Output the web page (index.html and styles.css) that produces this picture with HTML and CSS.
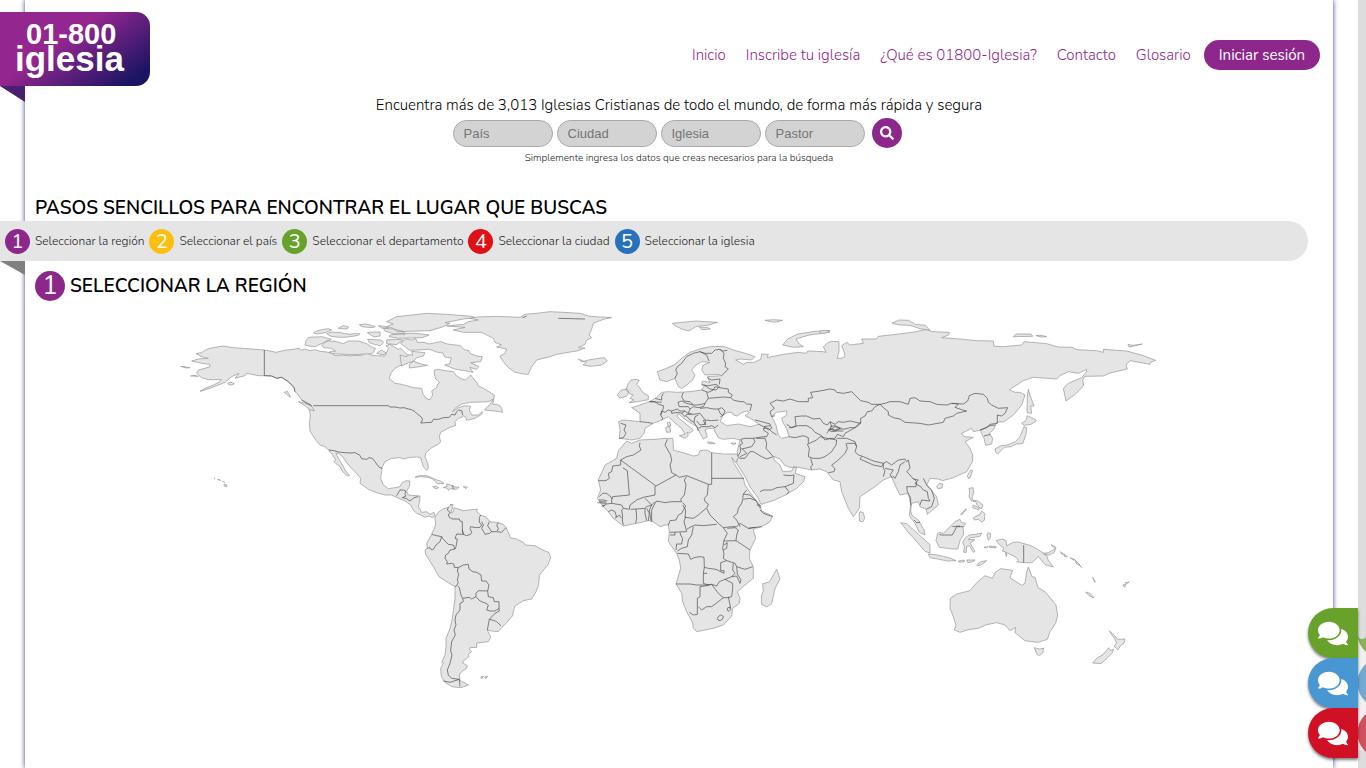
FILE: index.html
```html
<!DOCTYPE html>
<html lang="es">
<head>
<meta charset="utf-8">
<meta name="viewport" content="width=device-width, initial-scale=1">
<title>01-800 Iglesia</title>
<link rel="stylesheet" href="styles.css">
</head>
<body>
<div class="sheet">
  <header class="header">
    <a class="logo fold" href="#"><span class="logo-number">01-800</span><span class="logo-name">iglesia</span></a>
    <nav class="nav">
      <a href="#">Inicio</a>
      <a href="#">Inscribe tu iglesía</a>
      <a href="#">¿Qué es 01800-Iglesia?</a>
      <a href="#">Contacto</a>
      <a href="#">Glosario</a>
      <button class="login" type="button">Iniciar sesión</button>
    </nav>
  </header>
  <main>
    <form class="search">
      <p class="search-title">Encuentra más de 3,013 Iglesias Cristianas de todo el mundo, de forma más rápida y segura</p>
      <div class="search-row">
        <input type="text" placeholder="País" aria-label="País">
        <input type="text" placeholder="Ciudad" aria-label="Ciudad">
        <input type="text" placeholder="Iglesia" aria-label="Iglesia">
        <input type="text" placeholder="Pastor" aria-label="Pastor">
        <button class="search-button" type="submit" aria-label="Buscar"><svg viewBox="0 0 512 512"><path d="M505 442.7L405.3 343c-4.5-4.5-10.6-7-17-7H372c27.6-35.3 44-79.7 44-128C416 93.1 322.9 0 208 0S0 93.1 0 208s93.1 208 208 208c48.3 0 92.7-16.4 128-44v16.3c0 6.4 2.5 12.5 7 17l99.7 99.7c9.4 9.4 24.6 9.4 33.9 0l28.3-28.3c9.4-9.4 9.4-24.6.1-34zM208 336c-70.7 0-128-57.2-128-128 0-70.7 57.2-128 128-128 70.7 0 128 57.2 128 128 0 70.7-57.2 128-128 128z"/></svg></button>
      </div>
      <p class="search-note">Simplemente ingresa los datos que creas necesarios para la búsqueda</p>
    </form>
    <h2 class="title">PASOS SENCILLOS PARA ENCONTRAR EL LUGAR QUE BUSCAS</h2>
    <ol class="steps fold">
      <li><span class="number purple">1</span>Seleccionar la región</li>
      <li><span class="number yellow">2</span>Seleccionar el país</li>
      <li><span class="number green">3</span>Seleccionar el departamento</li>
      <li><span class="number red">4</span>Seleccionar la ciudad</li>
      <li><span class="number blue">5</span>Seleccionar la iglesia</li>
    </ol>
    <h2 class="title region-title"><span class="number large purple">1</span>SELECCIONAR LA REGIÓN</h2>
    <svg class="map" viewBox="-435 0 3924 1170" role="img" aria-label="Mapa del mundo">
      <!-- North America -->
      <g>
        <path class="land" d="M283 135L300 138 318 142 335 138 350 135 370 133 388 130 392 136 405 132 420 137 435 134 450 139 470 141 490 146 492 151 505 152 515 150 540 153 550 151 575 152 577 147 592 145 605 151 620 152 645 153 650 142 655 130 648 122 660 118 672 125 685 133 692 130 705 143 718 152 720 166 712 175 690 182 675 190 664 203 657 220 675 235 690 237 710 242 730 248 755 250 758 265 768 280 780 284 788 270 785 258 800 248 802 240 808 232 797 222 794 210 792 196 805 193 825 197 850 200 860 213 875 222 887 225 902 210 922 235 925 243 940 250 960 262 973 270 972 281 955 290 930 291 900 292 875 297 855 310 848 320 865 308 885 302 902 304 898 315 905 330 925 330 937 320 935 328 915 340 890 346 888 338 880 332 877 336 865 340 855 350 857 362 840 367 825 375 812 382 808 395 812 410 805 418 785 428 768 443 765 455 773 475 775 490 770 496 760 485 755 470 752 458 740 456 720 457 700 462 690 458 665 460 645 470 636 488 635 500 632 520 640 540 655 551 675 548 690 545 697 532 710 527 720 528 718 545 710 558 715 570 750 573 749 590 745 605 755 622 770 620 780 628 792 622 795 632 788 638 777 633 765 637 753 630 740 625 730 615 722 600 705 588 690 582 665 570 645 570 620 563 595 553 570 535 572 520 555 500 540 485 528 470 518 455 505 445 498 445 505 460 515 475 525 495 538 512 532 513 518 500 510 485 497 475 492 470 497 465 488 450 476 435 465 425 450 420 435 402 420 378 418 355 421 330 417 312 425 302 410 292 395 285 385 270 375 260 372 245 355 230 335 217 320 220 305 213 283 212 265 212 230 205 225 212 195 220 207 205 185 215 165 232 150 238 120 250 90 259 105 250 130 240 150 230 155 224 130 224 115 224 95 218 80 205 85 195 105 190 120 185 120 178 95 175 65 168 85 162 115 160 95 155 78 146 95 143 110 133 130 128 160 123 190 128 230 131Z"/>
        <path class="land" d="M32 184l10 1 18 3-12 1zM62 213l10-2 13 3zM173 234l10-2 10 4-8 4-10-2zM343 262l9-3 4 8 6 10-9-6zM385 290l18 4 22 10 8 14-15-5-15-12zM132 519l3 2zM143 523l9 3zM156 528l10 4M163 537l7 3 0 5-8-2zM405 120l3-13 8-10 40-2 28 8-22 10-15 6-10 6-20-2zM430 83l20-8 25-4 10 4-20 8-25 4zM505 70l15-8 16 4-5 6zM470 86l15-5 25 2 30 5 10-2 20 0-5 5-30 5-30 1-25-4zM568 59l20-2 28 8-10 3-30-3zM592 83l15-2 23 0 0 12-18 3zM455 122l15-15 30 3 20 6 15-8 30 0 25 8 15 10 12 5-10 15-60 3-60-3-10-5 20-3-15-8-20-2zM593 103l20 1 20 1 8 7-10 10-18-4-15-5zM625 62l20 2 10 5-20 0zM620 145l15-10 15 10-12 4zM650 50l30-15 90-10 60 3 75 6 15 5-35 2-60 12 15 2-20 10-40 12-100 3-10-10-20-5 20-8zM640 70l30 2 30 7 5 9-35-2-25-8zM660 90l40-5 40 0 37 5-20 8-70 2-30-5zM650 105l30-2 20 2-20 14-30-3zM692 115l15-13 20 3 10-5 5 12 20 0 15 5 35-7 20 7 40 5 10 12 15 3 3 8 20 8 17 2-5 15-30 3 25 12-8 8-20-6 10 15-25-5-30-5-30-12 15-3 5-18-20-3-5-12-20-3-20-8-60 3zM690 150l18 5 10-6 10 2-3-12 40 4-5 10-20 5-10 12-15 3-20 10zM718 178l12-10 25 10 18 3-30 5-25 3zM943 315l15-15 13-18-3 16 12 0 10 4 5 8 2 12-15-3z"/>
        <path class="land" d="M922 36L980 34 1050 37 1065 28 1100 25 1140 20 1180 22 1230 25 1255 33 1275 35 1325 38 1300 43 1270 55 1265 72 1257 90 1265 98 1250 106 1245 118 1225 128 1245 129 1225 137 1160 148 1140 155 1100 165 1085 185 1075 208 1060 207 1035 202 1015 188 1000 170 990 153 1005 145 1010 132 980 126 995 120 975 112 970 100 935 82 880 82 850 75 885 67 830 63 880 58 895 50 925 45 900 40ZM1225 162l10 9 20-6 30-5 18-2 9 10-18 12-30 4-25-4 10-8z"/>
        <path class="land" d="M735 517l12-5 23 0 15 6 15 7 12 3 10 8-20 0-14-14-14-5-22-2zM788 545l10-1 8 4-8 4zM820 548l10-4 0-7 10 2 12 6 15 2-8 6-18-2-6 5-4-7zM880 545l12 1-4 5zM841 598l9 2z"/>
        <path class="border" d="M283 135V212L305 213 320 220 335 217 355 230 372 248 375 260M430 302H655L660 306 675 306 690 309 702 308 715 312 725 314 735 320 742 327 754 336 758 344 752 354 768 353 785 352 790 343 805 343 820 338 838 337 845 328 855 330 860 320 865 315 875 317 878 330M476 435L492 437 505 441 525 443 540 444 555 443 570 451 575 461 590 463 597 458 607 460 615 470 622 480 628 487 637 490M680 572L690 555 700 555 707 558 705 568 708 573 697 578 708 580 720 588 732 578 745 575M1057 38L1070 34M1165 40L1245 42M395 285L402 290 425 302M848 540L850 553"/>
      </g>
      <!-- South America -->
      <g transform="translate(690 570)">
        <path class="land" d="M105 65L115 52 128 42 145 37 155 28 158 38 152 55 160 50 162 38 175 42 190 47 215 44 232 42 230 50 242 60 258 66 270 80 295 83 310 88 318 98 328 118 330 128 350 132 370 142 375 150 405 152 425 163 447 173 452 188 445 208 425 232 418 240 416 270 408 290 395 312 370 317 345 333 340 350 338 362 320 383 303 400 295 410 275 408 262 405 272 425 265 440 230 444 230 457 210 458 208 465 215 470 205 478 207 485 190 498 188 504 202 512 200 520 185 530 178 540 180 556 205 570 183 578 155 575 135 562 124 545 122 520 130 505 125 503 135 480 138 455 138 430 150 400 157 370 165 310 165 275 145 263 117 245 100 215 77 178 75 165 82 160 80 145 95 118 107 90 105 70ZM242 546l8-2-5 7zM254 546l9-2-6 7z"/>
        <path class="border" d="M145 37L142 45 150 52 145 60 148 67 158 72 178 72 180 78 187 80 187 105 190 118 170 117 165 130 172 132 168 155 165 162 160 150 145 148 130 133 125 125 110 122 95 118M125 125L120 140 108 150 100 163 95 165 90 158 82 160M187 105L190 118 200 122 212 118 215 112 210 100 212 95 228 98 240 97 245 90 238 82 238 68 242 60M245 80L250 90 245 100 252 112 255 118 268 115 275 110 290 110 305 112 318 98M268 80L263 92 275 110M295 83L290 92 295 100 292 108M165 162L150 165 145 175 137 180 135 190 142 200 140 207 155 205 162 208 163 217 175 218 172 228 176 238 172 255 175 262 170 272 165 275M175 218L190 210 205 208 207 222 218 230 230 232 243 240 245 258 258 258 267 270 263 288 235 287 228 295 228 305 215 312 208 307 188 310 183 300 178 278 172 272M228 305L240 318 258 325 265 330 260 345 270 348 285 348 297 340 297 320 283 320 280 308 265 305 263 288M297 340L298 348 285 355 268 373 280 376 290 380 303 393M268 373L262 405M188 310L190 320 180 325 180 345 168 360 165 375 168 390 162 405 166 420 155 440 152 468 156 480 150 505 142 525 145 540 155 550 178 553 180 574M130 558L150 562 178 553"/>
      </g>
      <!-- Europe and Asia -->
      <g transform="translate(1260 0)">
        <path class="land" d="M202 200L230 190 255 178 275 160 300 142 330 132 360 125 400 124 440 138 470 146 495 155 485 165 450 162 437 165 460 178 470 172 490 173 512 163 515 147 535 148 532 158 580 148 625 142 650 145 653 138 700 140 708 142 700 125 715 112 725 109 747 110 747 140 742 160 755 160 765 155 762 140 755 122 770 112 780 120 820 115 815 102 860 102 865 94 920 88 980 80 1010 73 1025 80 1078 82 1075 90 1055 98 1110 102 1160 107 1210 108 1212 124 1240 125 1295 120 1302 110 1370 116 1405 126 1445 127 1460 134 1520 137 1540 142 1540 133 1610 138 1660 152 1697 166 1682 172 1680 178 1620 167 1608 180 1612 192 1560 204 1540 213 1485 214 1478 224 1481 240 1468 256 1455 268 1428 288 1420 250 1435 235 1475 218 1490 200 1490 193 1465 205 1435 200 1410 212 1400 222 1330 217 1300 227 1258 254 1275 262 1290 262 1305 270 1295 300 1270 330 1242 350 1220 352 1212 372 1198 385 1208 400 1205 417 1187 421 1182 400 1174 385 1172 375 1150 380 1145 370 1115 385 1122 395 1150 397 1125 410 1140 430 1148 450 1148 468 1130 500 1090 518 1058 527 1045 522 1020 520 1010 540 1040 575 1045 600 1012 628 1008 612 990 605 985 590 965 595 962 618 965 630 985 645 1002 675 1005 690 988 682 975 655 958 632 962 600 955 565 930 570 915 540 905 515 880 525 855 545 810 575 808 610 790 635 775 610 755 560 750 530 730 525 710 500 690 492 665 495 625 487 600 487 583 480 570 462 553 455 552 465 570 480 578 500 605 498 612 485 620 487 615 505 645 515 640 530 620 550 590 568 555 585 513 598 505 580 480 545 465 515 440 475 443 455 442 440 450 405 430 400 400 403 385 398 375 380 372 370 355 370 345 375 352 395 340 402 330 385 322 365 312 360 295 350 275 335 265 325 262 335 285 355 310 375 300 385 290 382 295 392 285 400 268 392 285 388 275 370 250 350 235 335 215 345 190 355 165 370 162 385 150 400 125 405 105 402 88 400 90 375 86 350 100 345 150 350 150 325 125 308 150 300 178 290 200 278 215 262 235 260 262 262 300 260 335 255 345 240 335 238 338 228 360 232 352 215 395 212 385 208 345 210 335 195 340 180 360 172 335 170 318 180 305 195 315 210 308 225 290 240 275 250 265 245 255 220 230 230 210 225Z"/>
        <path class="sea" d="M391 350L398 332 410 323 425 322 430 330 442 333 455 323 470 318 478 323 465 332 490 345 507 358 480 365 445 357 410 362zM545 335L560 322 590 318 590 330 575 340 580 355 590 370 597 395 575 400 565 390 558 360z"/>
        <path class="land" d="M115 235l8-10 15-2 10 3-8 12 8 8 12 18 15 8 0 12-30 6-28 3 15-8-12-5 10-10-12-4-10-12zM82 270l12-15 18-3 5 10-8 12-20 5zM232 353l8-2 2 12-8 2zM227 368l12-5 3 18-12 1zM352 411l15 1 8 4-18 0zM423 414l15 1-8 4zM247 55l30-3 40-4 65 4-25 8-40 5-20 13-20-5-20-10zM328 67l25 0 8 5-25 2zM525 46l25-2 28 2-25 6zM578 120l15-18 30-15 55-8 40-3 0 6-60 8-40 12 10 15 12 8-30 2z"/>
        <path class="border" d="M255 220L262 205 257 195 262 185 275 175 290 155 310 145 330 140 345 145 365 145 375 135 390 133 398 138 412 136M390 133L402 145 400 160 407 175 405 185 415 192 395 212M330 140L350 150 357 168M335 240L355 242 378 238 388 245 378 255 360 252 345 242M352 218L365 225 390 222 388 238M335 255L355 262 370 255 375 245 400 250 415 252 415 262 427 270 422 278 400 276 355 280 350 262M280 262L275 275 282 288 300 290 310 300 320 300 335 298 345 295 355 280M264 292L275 288 290 295 310 300M422 278L430 285 450 290 462 290 470 297 485 298 480 318M345 295L340 305 325 308 310 305 300 312 295 325 285 318 270 318 262 312 245 318 235 315 225 322 215 318 212 330 218 340 215 345M188 355L170 352 150 350M212 330L220 310 220 302 205 298 195 290 178 290M220 265L215 275 215 285 205 283 195 280M178 290L215 292M245 318L245 325 265 322 275 325 285 318M264 292L268 305 295 305 300 312M330 310L350 308 370 312 385 312 395 308 405 318 400 330 391 335M385 312L390 325 398 330M295 325L310 328 330 325 340 338 345 345 365 347 385 345M275 325L285 335 290 328 305 328M288 332L300 345 312 352 315 335 325 330M312 352L320 365 325 378M320 348L330 360 345 358 340 345M325 370L335 365 355 365 365 362 375 368 385 360M345 345L347 360M92 355L108 360 102 375 108 385 100 398 88 400M495 345L515 350 540 357 545 370 535 375 525 365 520 375 535 385 530 395 520 395 490 400 465 400 452 403 458 415 450 420 452 440 443 455M490 400L495 410 485 425 455 432M455 430L470 445 450 455M520 370L535 370 545 380 560 390M507 358L520 365 540 362M545 335L540 320 553 310 540 295 560 285 580 288 600 282 625 290 655 290 655 280 668 278 662 262 690 258 720 252 735 255 740 262 760 265 785 260 795 270 812 287 835 292 845 298 870 298M545 335L555 332M870 298L855 305 845 318 832 320 825 333 812 340 812 355 780 348 760 352 745 350 735 358 720 350 712 360 700 355 690 340 670 342 650 333 635 333 615 335 618 362 605 368 590 358M870 298L885 295 900 290 930 290 955 298 960 280 975 278 990 288 1020 290 1040 298 1070 300 1085 295 1120 297 1133 288 1138 272 1155 265 1180 268 1192 280 1195 292 1205 300 1225 310 1253 308 1245 325 1235 333 1222 330 1222 355 1200 358 1190 368 1170 375M1085 295L1105 297 1095 307 1118 315 1130 318 1100 325 1090 333 1065 340 1060 352 1015 360 990 355 945 352 930 342 910 338 895 330 895 320 885 312 870 298M597 368L605 368 625 362 650 362 665 370 675 382 695 392 705 405 720 400 735 400 742 388 760 395 765 385 800 365 812 355M655 415L655 398 640 392 615 398 597 395M665 412L680 405 690 395 710 400 740 405 738 420 725 440 705 455 690 460 670 460 655 455 658 430 652 418 665 412M720 350L725 365 715 375 725 380 740 378 760 378M720 375L735 365 755 370M740 400L770 400 795 410 800 425 795 440 805 450 820 455 850 468 880 475 890 470 905 480 925 465 945 462 950 470 955 465 960 490 950 500 960 510 970 522 985 525M768 415L772 430 765 445 745 465 732 475 725 480 735 492 732 500 715 503M770 415L795 415 800 425M815 455L810 462 850 480 875 485 880 475M880 475L880 490 885 497 880 515M885 490L910 495 900 510 908 520M945 470L930 480 925 500 915 520 908 512M970 520L980 530 978 545 950 545 952 560 962 580 962 600M985 525L975 535 992 545 1000 555 1012 560 1015 580 1020 588 995 585 990 600M1000 520L1010 540 1025 555 1033 580 1025 605 1010 612M500 400L525 400 530 415 528 430 550 455 530 462 515 455 490 440 480 440 465 460 450 460 443 455M510 560L520 555 545 555 560 548 585 545 597 560 590 568M585 545L610 535 612 510 600 512 580 510M662 460L668 480 662 485 665 495M362 440"/>
      </g>
      <!-- East Asian islands and Arctic coast -->
      <g transform="translate(1950 0)">
        <path class="land" d="M0 79l15-3 15 2-15 6-15 2zM216 55l20-10 30 1 20 12 30 3 14 15-30-5-30-10-30-1zM580 95l8-8 45 0 5 7zM648 92l15-1 17 4-17 1zM924 118l15 3 28-4-25 6-15 3zM625 253l5 18 12 32-10 0 3 22-14-2 1-50zM622 332l25 12 2 4-16 10-20 3-8-6 12-8zM612 365l8 3-2 20-10 28-20 1-15 8-20 2-10 10-10 10-6-5-2-10 18-10 18-2 15-6 10-4 14-15zM442 512l10-17 6 2-8 22-5 2zM350 545l8-10 10 2-2 12-12 2zM120 620l10 3 4 17-5 10-10-1-2-18zM447 550l12-2 2 15-5 15 3 8 15 2 15 12-5 12-12-10-5-12-12-2-8-12 2-15zM460 638l20-10 5-10 10 8-2 20-8 5-10-8-12 2zM422 628l15-16 3 0-15 18zM460 600l18 10-2 5-18-7z"/>
        <path class="border" d="M482 375L510 362 525 360M492 393L512 388M20 385L30 372 45 378 60 372 75 372 90 368 105 368 120 352M30 365L45 362 60 370 45 375 30 370"/>
      </g>
      <!-- Africa -->
      <g transform="translate(1260 375)">
        <path class="land" d="M110 33L125 40 150 30 195 28 225 25 248 25 250 40 250 60 285 70 310 78 325 75 330 62 350 60 365 68 400 72 440 72 445 82 437 98 425 82 432 100 460 145 465 165 475 180 490 200 510 225 515 243 548 258 540 275 515 290 497 295 490 300 497 325 480 360 478 385 490 410 490 445 465 465 442 485 450 505 448 520 428 535 425 558 400 585 370 595 320 605 310 595 308 578 290 545 278 515 275 490 258 462 272 415 268 390 260 370 235 335 238 305 235 285 225 285 210 290 190 275 175 272 140 280 100 288 70 265 55 245 40 230 22 205 32 180 25 150 45 105 80 85 85 62ZM560 418l10 28-15 30-10 45-15 10-15-8-1-25 6-15-2-22 20-5z"/>
        <path class="border" d="M150 38L148 48 153 60 130 75 110 80 92 90 92 105 68 108 65 125 55 130 58 145 48 152 25 152M92 90L198 168 258 135 245 128 240 105 245 92 242 75 225 45 232 28M112 122L118 195 68 200 65 208M112 122L98 113M195 168L195 195 160 202 140 210 120 225 118 238 100 235 95 225 65 220 65 208M165 205L185 225 195 215M258 135L268 142 290 137 355 163H365V68M365 145H462M355 163L352 195 343 205 345 215 355 222 350 235 360 255 385 280 400 293 425 290 440 290 450 280 475 295 497 292M290 140L283 150 288 165 283 195 272 208 275 215 245 215 225 218 200 213 192 225 185 240 185 275M278 218L287 228 275 250 265 255 258 270 240 272 235 285M278 225L287 240 285 262 310 265 325 255 348 235M287 260L282 275 290 305 240 307M290 298L300 292 315 285 340 287 380 283M310 290L305 315 295 330 292 350 275 355 262 363M240 315L255 315 255 307M270 307L272 315 278 325 275 342 260 342 258 360M262 370L295 372 302 388 315 382 330 380 342 382 343 412 355 415 378 418 392 425 402 430 402 422 392 422 392 398 410 392M400 293L412 310 402 330 398 355 402 370 400 385 410 392 435 400 440 410 465 418 488 410M402 333L438 332 458 345 480 360M402 345L412 338 410 355 400 360M412 295L435 293 445 300 440 315 438 332M450 290L440 270 430 260 442 250 445 235 455 220 458 208 480 205 498 212 508 230M458 205L460 192 470 180M460 192L480 195 498 212M500 225L510 225 510 235M510 240L520 250 548 260M515 290L475 295M343 412L340 430 352 430M340 430V460L355 465 320 465 300 462 258 462M350 465L365 463 380 468 388 455 405 448 425 440 440 438 450 460 453 450 442 432 440 410M430 400L428 420 435 430 425 440M365 463L350 467 330 470 330 500 322 505 322 553 310 555 298 547M325 530L335 540 350 530 365 530 385 515 400 503 385 490 365 463M405 448L428 460 428 475 425 500 415 503 400 503M415 500L420 525 422 535M382 565l4-6 6-4 8 4-2 8-8 5-6-2zM412 535l6-4 4 8-5 5-5-3zM137 280L140 265 138 237 165 235 165 250 170 272M138 237L122 238M170 235L178 250 175 272M185 225L178 240 183 272M100 285L97 270 98 260 95 240 100 235M55 245L65 240 75 245 80 262 88 255 95 265M75 265L80 258M38 230L50 222 65 220M28 200L38 190 50 190 60 198 68 208M22 218L50 220M25 210L40 210 52 213M28 215L48 216M35 228L45 225M165 235L170 230 185 225"/>
      </g>
      <!-- Oceania -->
      <g transform="translate(2130 525)">
        <path class="land" d="M445 261L456 290 465 292 474 323 495 335 512 355 528 375 533 405 527 430 510 455 502 478 475 487 455 485 435 482 420 470 405 458 407 442 390 452 375 435 350 428 320 434 295 445 265 449 240 457 223 450 228 435 218 405 210 385 211 355 230 342 270 332 290 308 315 287 337 295 345 278 362 266 398 271 390 293 425 316 435 310 440 275ZM463 503l14 4 14-2-3 14-10 8-8-6zM688 453l15 13 10 12 22-1-3 12-10 8-8 12-12-10 8-10-8-15zM686 503l5 8 10-3-5 12-15 15-18 16-25-2 12-14 20-12zM62 128l18 3 20 18 30 27 20 18 0 25-15-5-30-35-20-22zM145 222l20 2 25 5 20 5 18 8-25 1-25-5-28-5zM173 160l5-3 12 3 15-15 20-20 15-7 5 10 12 2-8 12 2 22-10 15-8 28-15 0-40-5-10-20zM255 175l12-10 20-2 18-4-5 10-30 5-5 5 20 0-15 10 15 25-5 3-12-20-8 2-1 18-8 0 2-18-5-12zM235 243l18-3 0 5-15 2zM260 240l25 0-10 6-12 2zM290 255l12-10 18-3-15 12-13 3zM312 202l12-2-4 4zM328 198l20 2 0 4-20-2zM325 158l7 3-1 12-6 8-4-16zM348 182l20-5 10 5 2 15 20-10 15-1 35 10 20 10 30 20 5 15 15 20-25-7-20-25-20 20-45-3 5-5-8-10-30-15-10-3 5-8-10-8zM490 220l15-2 20-12-12-12 15 8-5 15-15 8-15-1zM541 215l10 8-5 0zM552 222l10 8-8 0zM570 233l15 6-5 1zM585 240l15 15-10-3zM598 255l7 8zM638 292l8 14-2 1zM617 336l15 5 10 13-15-7zM728 315l10-3-4 10zM735 308l13-2-8 5zM376 218l5 4-2 8z"/>
        <path class="border" d="M431 195V248M178 163L185 165 217 165 225 150 230 140 250 140M217 140L240 138M102 120L110 128 120 127"/>
      </g>
    </svg>
  </main>
</div>
<div class="scroll-rail" aria-hidden="true"><span class="scroll-thumb"></span></div>
<aside class="chats">
  <button class="chat green" type="button" aria-label="Chat verde"><svg viewBox="0 0 576 512"><path d="M416 192c0-88.4-93.1-160-208-160S0 103.6 0 192c0 34.3 14.1 65.9 38 92-13.4 30.2-35.5 54.2-35.8 54.5-2.2 2.3-2.8 5.7-1.5 8.7S4.8 352 8 352c36.6 0 66.9-12.3 88.7-25 32.2 15.7 70.3 25 111.3 25 114.9 0 208-71.6 208-160zm122 220c23.9-26 38-57.7 38-92 0-66.9-53.5-124.2-129.3-148.1.9 6.6 1.3 13.3 1.3 20.1 0 105.9-107.7 192-240 192-10.8 0-21.3-.8-31.7-1.9C207.8 439.6 281.8 480 368 480c41 0 79.1-9.2 111.3-25 21.8 12.7 52.1 25 88.7 25 3.2 0 6.1-1.9 7.3-4.8 1.3-2.9.7-6.3-1.5-8.7-.3-.3-22.4-24.2-35.8-54.5z"/></svg></button>
  <button class="chat sky" type="button" aria-label="Chat azul"><svg viewBox="0 0 576 512"><path d="M416 192c0-88.4-93.1-160-208-160S0 103.6 0 192c0 34.3 14.1 65.9 38 92-13.4 30.2-35.5 54.2-35.8 54.5-2.2 2.3-2.8 5.7-1.5 8.7S4.8 352 8 352c36.6 0 66.9-12.3 88.7-25 32.2 15.7 70.3 25 111.3 25 114.9 0 208-71.6 208-160zm122 220c23.9-26 38-57.7 38-92 0-66.9-53.5-124.2-129.3-148.1.9 6.6 1.3 13.3 1.3 20.1 0 105.9-107.7 192-240 192-10.8 0-21.3-.8-31.7-1.9C207.8 439.6 281.8 480 368 480c41 0 79.1-9.2 111.3-25 21.8 12.7 52.1 25 88.7 25 3.2 0 6.1-1.9 7.3-4.8 1.3-2.9.7-6.3-1.5-8.7-.3-.3-22.4-24.2-35.8-54.5z"/></svg></button>
  <button class="chat crimson" type="button" aria-label="Chat rojo"><svg viewBox="0 0 576 512"><path d="M416 192c0-88.4-93.1-160-208-160S0 103.6 0 192c0 34.3 14.1 65.9 38 92-13.4 30.2-35.5 54.2-35.8 54.5-2.2 2.3-2.8 5.7-1.5 8.7S4.8 352 8 352c36.6 0 66.9-12.3 88.7-25 32.2 15.7 70.3 25 111.3 25 114.9 0 208-71.6 208-160zm122 220c23.9-26 38-57.7 38-92 0-66.9-53.5-124.2-129.3-148.1.9 6.6 1.3 13.3 1.3 20.1 0 105.9-107.7 192-240 192-10.8 0-21.3-.8-31.7-1.9C207.8 439.6 281.8 480 368 480c41 0 79.1-9.2 111.3-25 21.8 12.7 52.1 25 88.7 25 3.2 0 6.1-1.9 7.3-4.8 1.3-2.9.7-6.3-1.5-8.7-.3-.3-22.4-24.2-35.8-54.5z"/></svg></button>
</aside>
</body>
</html>
```
FILE: styles.css
```css
* { box-sizing: border-box; }
body {
  margin: 0;
  padding: 0 33px 0 25px;
  background: #fff;
  color: #000;
  font-family: Nunito, "Open Sans", sans-serif;
  font-size: 15px;
}
button, input { font: inherit; }
p, h2, ol { margin: 0; padding: 0; }
.sheet {
  min-height: 100vh;
  box-shadow: 0 0 5px #3a3a8c;
}
.header {
  display: flex;
  justify-content: space-between;
  align-items: flex-start;
  padding-top: 12px;
}
.logo {
  display: flex;
  flex-direction: column;
  width: 150px;
  height: 74px;
  margin-left: -25px;
  padding: 8px 0 0 15px;
  border-radius: 0 14px 14px 0;
  background: linear-gradient(145deg, #93278f 40%, #1b1464 90%);
  color: #fff;
  font-family: "Liberation Sans", sans-serif;
  font-weight: 700;
  text-decoration: none;
}
.logo-number {
  padding-left: 11px;
  font-size: 29px;
  line-height: 29px;
}
.logo-name {
  font-size: 35px;
  line-height: 20px;
}
/* Turned-under corner of a ribbon */
.fold { position: relative; }
.fold::after {
  content: "";
  position: absolute;
  top: 100%;
  left: 0;
  width: 25px;
  height: 16px;
  background: #4b1f6f;
  clip-path: polygon(0 0, 100% 0, 100% 100%);
}
.nav {
  display: flex;
  align-items: center;
  padding: 28px 13px 0 0;
}
.nav a {
  padding: 0 10px;
  color: #8e278c;
  font-weight: 350;
  text-decoration: none;
}
.login {
  height: 30px;
  margin-left: 3px;
  padding: 0 15px;
  border: 0;
  border-radius: 15px;
  background: #8e278c;
  color: #fff;
}
.search {
  display: flex;
  flex-direction: column;
  align-items: center;
  padding-top: 8px;
}
.search-title {
  font-weight: 350;
  line-height: 22px;
}
.search-row {
  display: flex;
  align-items: center;
  gap: 4px;
  padding: 2px 4px 0 0;
}
.search-row input {
  width: 100px;
  height: 27px;
  padding: 0 10px;
  border: 1px solid #a9a9a9;
  border-radius: 14px;
  background: #d3d3d3;
  font-family: "Liberation Sans", sans-serif;
  font-size: 13px;
}
.search-row input::placeholder { color: #757575; }
.search-button {
  display: flex;
  align-items: center;
  justify-content: center;
  width: 30px;
  height: 30px;
  margin-left: 3px;
  padding: 0;
  border: 0;
  border-radius: 50%;
  background: #8e278c;
}
.search-button svg {
  width: 14px;
  height: 14px;
  fill: #fff;
}
.search-note {
  color: #222;
  font-size: 10px;
  font-weight: 350;
  line-height: 20px;
}
.title {
  padding: 27px 10px 0;
  font-size: 19px;
  font-weight: 600;
  line-height: 26px;
}
.steps {
  display: flex;
  align-items: center;
  gap: 5px;
  height: 40px;
  margin: 0 25px 0 -25px;
  padding-left: 5px;
  border-radius: 0 20px 20px 0;
  background: #e5e5e5;
  color: #222;
  font-size: 12px;
  font-weight: 350;
  list-style: none;
}
.steps::after {
  height: 14px;
  background: #808080;
}
.steps li {
  display: flex;
  align-items: center;
  gap: 5px;
}
.number {
  display: inline-flex;
  align-items: center;
  justify-content: center;
  width: 25px;
  height: 25px;
  border-radius: 50%;
  color: #fff;
  font-size: 20px;
  font-weight: 400;
}
.number.large {
  width: 30px;
  height: 30px;
  font-size: 26px;
}
.region-title {
  display: flex;
  align-items: center;
  gap: 5px;
  padding-top: 10px;
}
.purple { background: #8e278c; }
.yellow { background: #fcbf10; }
.green { background: #68a22b; }
.red { background: #df1118; }
.blue { background: #2871bd; }
.sky { background: #4997d2; }
.crimson { background: #cf1025; }
.map {
  display: block;
  width: 100%;
  margin-top: 4px;
}
.map path { stroke-linejoin: round; }
.land {
  fill: #e5e5e5;
  stroke: #929292;
  stroke-width: 2;
}
.sea {
  fill: #fff;
  stroke: #929292;
  stroke-width: 2;
}
.border {
  fill: none;
  stroke: #484848;
  stroke-width: 2;
}
.scroll-rail {
  position: fixed;
  top: 0;
  right: 0;
  bottom: 0;
  width: 8px;
  overflow: hidden;
  background: linear-gradient(#f0f0f0 750px, #ddd 750px);
}
.scroll-rail::before {
  content: "";
  position: absolute;
  top: 608px;
  left: 0;
  width: 50px;
  height: 150px;
  background:
    radial-gradient(circle at 25px 25px, #86b457 25px, transparent 26px) 0 0 / 50px 50px no-repeat,
    radial-gradient(circle at 25px 25px, #72a9d3 25px, transparent 26px) 0 50px / 50px 50px no-repeat,
    radial-gradient(circle at 25px 25px, #d05060 25px, transparent 26px) 0 100px / 50px 50px no-repeat;
}
.scroll-thumb {
  position: absolute;
  top: 0;
  left: 0;
  width: 8px;
  height: 639px;
  border-radius: 0 0 4px 4px;
  background: #ddd;
}
.chats {
  position: fixed;
  right: 8px;
  bottom: 10px;
}
.chat {
  display: flex;
  align-items: center;
  justify-content: center;
  width: 50px;
  height: 50px;
  padding: 0;
  border: 0;
  border-radius: 25px 0 0 25px;
  box-shadow: 0 2px 3px rgba(0, 0, 0, .5);
}
.chat svg {
  width: 30px;
  height: 27px;
  fill: #fff;
}
```
